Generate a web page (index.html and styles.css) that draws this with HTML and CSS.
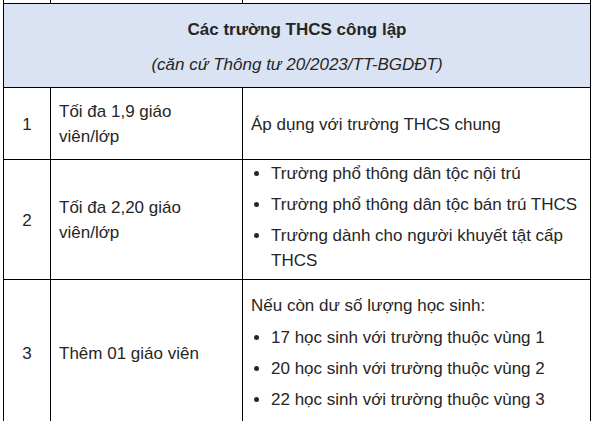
FILE: index.html
```html
<!DOCTYPE html>
<html lang="vi">
<head>
<meta charset="utf-8">
<link rel="stylesheet" href="styles.css">
</head>
<body>
<div class="wrap">
<table class="tbl">
  <colgroup>
    <col class="c1">
    <col class="c2">
    <col class="c3">
  </colgroup>
  <tr class="prev"><td></td><td></td><td></td></tr>
  <tr class="head">
    <td colspan="3">
      <p class="title">Các trường THCS công lập</p>
      <p class="sub">(căn cứ Thông tư 20/2023/TT-BGDĐT)</p>
    </td>
  </tr>
  <tr class="r1">
    <td class="num">1</td>
    <td class="txt">Tối đa 1,9 giáo viên/lớp</td>
    <td class="txt">Áp dụng với trường THCS chung</td>
  </tr>
  <tr class="r2">
    <td class="num">2</td>
    <td class="txt">Tối đa 2,20 giáo viên/lớp</td>
    <td class="list">
      <ul>
        <li>Trường phổ thông dân tộc nội trú</li>
        <li>Trường phổ thông dân tộc bán trú THCS</li>
        <li>Trường dành cho người khuyết tật cấp THCS</li>
      </ul>
    </td>
  </tr>
  <tr class="r3">
    <td class="num">3</td>
    <td class="txt">Thêm 01 giáo viên</td>
    <td class="list2">
      <p>Nếu còn dư số lượng học sinh:</p>
      <ul>
        <li>17 học sinh với trường thuộc vùng 1</li>
        <li>20 học sinh với trường thuộc vùng 2</li>
        <li>22 học sinh với trường thuộc vùng 3</li>
      </ul>
    </td>
  </tr>
</table>
</div>
</body>
</html>
```

FILE: styles.css
```css
html, body {
  margin: 0;
  padding: 0;
  background: #fff;
}
.wrap {
  padding-left: 3px;
}
.tbl {
  border-collapse: collapse;
  table-layout: fixed;
  width: 587px;
  font-family: "Liberation Sans", Arial, sans-serif;
  font-size: 17px;
  line-height: 25px;
  color: #262626;
}
.c1 { width: 47px; }
.c2 { width: 192px; }
.c3 { width: 348px; }
.tbl td {
  border: 1px solid #000;
  padding: 11px 8px 10px;
  vertical-align: middle;
}
.prev td {
  border-top: 0;
  height: 3px;
  padding: 0;
  font-size: 0;
  line-height: 0;
}
.head td {
  background: #dae3f3;
  text-align: center;
  padding: 13px 8px 10px;
}
.head p { margin: 0; }
.title { font-weight: bold; }
.sub { font-style: italic; margin-top: 10px !important; }
.num { text-align: center; }
.txt { padding-right: 14px !important; }
.list {
  padding: 1px 8px 6px !important;
}
.list ul, .list2 ul {
  margin: 0;
  padding-left: 20px;
}
.list li + li {
  margin-top: 6px;
}
.list2 {
  padding: 13px 8px 13px !important;
}
.list2 p { margin: 0 0 7px; }
.list2 li + li { margin-top: 6px; }
```
